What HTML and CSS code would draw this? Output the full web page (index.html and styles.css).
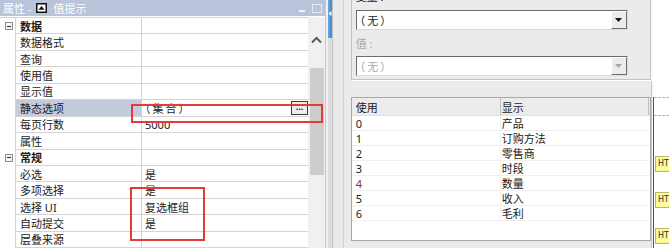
FILE: index.html
```
<!DOCTYPE html>
<html lang="zh-CN">
<head>
    <meta charset="UTF-8">
    <title>值提示 属性</title>
    <link rel="stylesheet" href="styles.css">
</head>
<body>
    <div class="screen">
        <div class="props">
            <div class="props-title">
                <span>属性 -</span>
                <svg class="title-icon" width="11" height="10" viewBox="0 0 11 10">
                    <rect x="0.75" y="0.75" width="9.5" height="8.5" fill="#fff" stroke="#111" stroke-width="1.5"/>
                    <polygon points="2.5,6.8 5.5,3 8.5,6.8" fill="#111"/>
                </svg>
                <span>值提示</span>
                <span class="title-btns">
                    <span class="btn-min"></span>
                    <span class="btn-max"></span>
                </span>
            </div>
            <div class="props-body">
                <div class="grid">
                    <div class="row section">
                        <div class="gutter"><span class="expander"></span></div>
                        <div class="name">数据</div>
                        <div class="value"></div>
                    </div>
                    <div class="row">
                        <div class="gutter"></div>
                        <div class="name">数据格式</div>
                        <div class="value"></div>
                    </div>
                    <div class="row">
                        <div class="gutter"></div>
                        <div class="name">查询</div>
                        <div class="value"></div>
                    </div>
                    <div class="row">
                        <div class="gutter"></div>
                        <div class="name">使用值</div>
                        <div class="value"></div>
                    </div>
                    <div class="row">
                        <div class="gutter"></div>
                        <div class="name">显示值</div>
                        <div class="value"></div>
                    </div>
                    <div class="row selected">
                        <div class="gutter"></div>
                        <div class="name">静态选项</div>
                        <div class="value">
                            <span class="paren">（集合）</span>
                            <span class="ellipsis-btn">...</span>
                        </div>
                    </div>
                    <div class="row">
                        <div class="gutter"></div>
                        <div class="name">每页行数</div>
                        <div class="value">5000</div>
                    </div>
                    <div class="row">
                        <div class="gutter"></div>
                        <div class="name">属性</div>
                        <div class="value"></div>
                    </div>
                    <div class="row section">
                        <div class="gutter"><span class="expander"></span></div>
                        <div class="name">常规</div>
                        <div class="value"></div>
                    </div>
                    <div class="row">
                        <div class="gutter"></div>
                        <div class="name">必选</div>
                        <div class="value">是</div>
                    </div>
                    <div class="row">
                        <div class="gutter"></div>
                        <div class="name">多项选择</div>
                        <div class="value">是</div>
                    </div>
                    <div class="row">
                        <div class="gutter"></div>
                        <div class="name">选择 UI</div>
                        <div class="value">复选框组</div>
                    </div>
                    <div class="row">
                        <div class="gutter"></div>
                        <div class="name">自动提交</div>
                        <div class="value">是</div>
                    </div>
                    <div class="row">
                        <div class="gutter"></div>
                        <div class="name">层叠来源</div>
                        <div class="value"></div>
                    </div>
                </div>
                <div class="vscroll">
                    <svg class="vscroll-up" width="11" height="8" viewBox="0 0 11 8">
                        <polyline points="1,6.5 5.5,2 10,6.5" fill="none" stroke="#5a5a5a" stroke-width="2"/>
                    </svg>
                    <div class="vscroll-thumb"></div>
                </div>
            </div>
        </div>

        <div class="splitter">
            <div class="split-edge"></div>
            <div class="split-rail">
                <div class="split-tab">
                    <svg width="4" height="5" viewBox="0 0 4 5"><polygon points="3.5,0 0.5,2.5 3.5,5" fill="#fff"/></svg>
                </div>
            </div>
            <div class="split-fill"></div>
        </div>

        <div class="editor">
            <div class="group">
                <div class="field-label">变量 :</div>
                <div class="combo">
                    <span class="paren">（无）</span>
                    <span class="combo-btn"><svg width="7" height="4" viewBox="0 0 7 4"><polygon points="0,0 7,0 3.5,4" fill="#111"/></svg></span>
                </div>
                <div class="field-label disabled">值 :</div>
                <div class="combo disabled">
                    <span class="paren">（无）</span>
                    <span class="combo-btn"><svg width="7" height="4" viewBox="0 0 7 4"><polygon points="0,0 7,0 3.5,4" fill="#a8a8a8"/></svg></span>
                </div>
            </div>

            <div class="list">
                <div class="list-head">
                    <div class="col-use">使用</div>
                    <div class="col-show">显示</div>
                </div>
                <div class="list-row"><div class="col-use">0</div><div class="col-show">产品</div></div>
                <div class="list-row"><div class="col-use">1</div><div class="col-show">订购方法</div></div>
                <div class="list-row"><div class="col-use">2</div><div class="col-show">零售商</div></div>
                <div class="list-row"><div class="col-use">3</div><div class="col-show">时段</div></div>
                <div class="list-row"><div class="col-use red">4</div><div class="col-show">数量</div></div>
                <div class="list-row"><div class="col-use">5</div><div class="col-show">收入</div></div>
                <div class="list-row"><div class="col-use">6</div><div class="col-show">毛利</div></div>
            </div>
        </div>

        <div class="outside">
            <div class="outside-edge">
                <div class="dotted-box"></div>
                <div class="badge first">HT</div>
                <div class="badge">HT</div>
                <div class="badge">HT</div>
            </div>
        </div>

        <!-- красные рамки поверх -->
        <div class="mark mark-static"></div>
        <div class="mark mark-multi"></div>
    </div>
</body>
</html>
```

FILE: styles.css
```
* {
    box-sizing: border-box;
}

body {
    margin: 0;
    width: 669px;
    height: 248px;
    overflow: hidden;
    background: #fff;
    color: #1b1b1b;
    font-family: "Noto Sans", "Noto Sans CJK SC", sans-serif;
    font-size: 11px;
}

.screen {
    position: relative;
    display: flex;
    width: 669px;
    height: 248px;
    overflow: hidden;
}

/* левая панель свойств */

.props {
    width: 326px;
    display: flex;
    flex-direction: column;
    background: #fff;
    border-right: 1px solid #c6c6c6;
}

.props-title {
    height: 21px;
    display: flex;
    align-items: center;
    padding-left: 3px;
    background: #b9c4da;
    color: #fff;
    white-space: nowrap;
}

.title-icon {
    margin: 0 6px 0 5px;
}

.title-btns {
    margin-left: auto;
    display: flex;
    align-items: center;
    height: 100%;
}

.btn-min {
    width: 6px;
    height: 2px;
    margin-top: 6px;
    margin-right: 7px;
    background: #eef1f7;
}

.btn-max {
    width: 10px;
    height: 9px;
    margin-right: 3px;
    border: 1px solid #e3e8f1;
}

.props-body {
    flex: 1;
    display: flex;
    margin-top: 1px;
}

.grid {
    width: 308px;
    border-top: 1px solid #d4d4d4;
}

.row {
    display: flex;
    height: 16.44px;
}

.gutter {
    width: 16px;
    display: flex;
    align-items: center;
    padding-left: 5px;
    border-right: 1px solid #d4d4d4;
}

.expander {
    position: relative;
    width: 8px;
    height: 8px;
    border: 1px solid #8c8c8c;
    background: #f4f4f4;
}

.expander::after {
    content: '';
    position: absolute;
    left: 1px;
    top: 2.5px;
    width: 4px;
    height: 1px;
    background: #333;
}

.name {
    width: 126px;
    display: flex;
    align-items: center;
    padding-left: 4px;
    border-right: 1px solid #d4d4d4;
    border-bottom: 1px solid #d4d4d4;
    white-space: nowrap;
}

.value {
    flex: 1;
    display: flex;
    align-items: center;
    padding-left: 3px;
    border-bottom: 1px solid #d4d4d4;
    white-space: nowrap;
}

.section .name {
    font-weight: bold;
}

.selected .name {
    background: #c3cbdd;
}

.paren {
    font-feature-settings: "halt";
    letter-spacing: 2px;
}

.ellipsis-btn {
    margin-left: auto;
    width: 17px;
    height: 14px;
    display: flex;
    align-items: center;
    justify-content: center;
    border: 1px solid #3a3a3a;
    background: #ededed;
    font-size: 9px;
    font-weight: bold;
    line-height: 1;
    padding-bottom: 3px;
}

.vscroll {
    width: 17px;
    display: flex;
    flex-direction: column;
    align-items: center;
    background: #f0f0f0;
}

.vscroll-up {
    margin-top: 19px;
}

.vscroll-thumb {
    width: 14px;
    height: 107px;
    margin-top: 24px;
    margin-left: 1px;
    background: #cdcdcd;
}

/* разделитель */

.splitter {
    width: 18px;
    display: flex;
    background: #e9e9e9;
}

.split-edge {
    width: 2px;
    background: #f0f0f0;
}

.split-rail {
    width: 5px;
    background: #dcdcdc;
    border-right: 1px solid #c4c4c4;
}

.split-tab {
    height: 38px;
    display: flex;
    align-items: flex-start;
    justify-content: center;
    padding-top: 11px;
    background: linear-gradient(to right, #6ca6dc, #3f87cc);
}

.split-fill {
    flex: 1;
    border-right: 1px solid #d0d0d0;
}

/* правая панель редактора */

.editor {
    width: 313px;
    padding-left: 7px;
    background: #ebebeb;
    border-right: 1px solid #c6c6c6;
}

.group {
    width: 300px;
    margin-top: -20px;
    padding: 0 0 3px 4px;
    border: 1px solid #c2c2c2;
    box-shadow: 1px 1px 0 #fff;
}

.field-label {
    height: 16px;
    line-height: 16px;
    margin-top: 8px;
}

.field-label.disabled {
    margin-top: 6px;
    color: #a8a8a8;
}

.combo {
    width: 272px;
    height: 20px;
    display: flex;
    align-items: center;
    margin-top: 5px;
    padding-left: 3px;
    background: #fff;
    border: 1px solid;
    border-color: #6c6c6c #dcdcdc #dcdcdc #6c6c6c;
}

.combo.disabled {
    margin-top: 4px;
    color: #a8a8a8;
}

.combo-btn {
    margin-left: auto;
    width: 16px;
    height: 18px;
    display: flex;
    align-items: center;
    justify-content: center;
    background: #ececec;
    border: 1px solid;
    border-color: #fff #6e6e6e #6e6e6e #fff;
}

.list {
    width: 300px;
    height: 144px;
    margin-top: 17px;
    background: #fff;
    border: 1px solid #a9a9a9;
}

.list-head {
    height: 18px;
    display: flex;
    background: #ececec;
    border-bottom: 1px solid #e0e0e0;
}

.list-head .col-use {
    border-right: 1px solid #c0c0c0;
}

.list-head .col-show {
    width: 148px;
    flex: none;
    border-right: 1px solid #c0c0c0;
}

.col-use {
    width: 149px;
    display: flex;
    align-items: center;
    padding-left: 4px;
    border-right: 1px solid #f2f2f2;
}

.col-show {
    flex: 1;
    display: flex;
    align-items: center;
    padding-left: 1px;
}

.list-row {
    height: 15px;
    display: flex;
    border-bottom: 1px solid #efefef;
}

.red {
    color: #9c2a1e;
}

/* кусок соседнего окна справа */

.outside {
    flex: 1;
    border-left: 1px solid #f6f6f6;
    background: #fff;
}

.outside-edge {
    height: 100%;
    border-left: 1px solid #555;
}

.dotted-box {
    height: 19px;
    margin-top: 97px;
    border-top: 1px dashed #b5b5b5;
    border-bottom: 1px dashed #b5b5b5;
}

.badge {
    height: 16px;
    margin-top: 20px;
    margin-left: 1px;
    padding-left: 2px;
    background: #fbfb9c;
    border: 1px solid #b7b76a;
    border-right: none;
    font-family: "DejaVu Sans", sans-serif;
    font-size: 8px;
    line-height: 14px;
    color: #333;
    overflow: hidden;
}

.badge.first {
    margin-top: 40px;
}

/* красные рамки */

.mark {
    position: absolute;
    border: 2px solid #e53a3a;
}

.mark-static {
    left: 131px;
    top: 103.5px;
    width: 192px;
    height: 19px;
}

.mark-multi {
    left: 129.5px;
    top: 187px;
    width: 75px;
    height: 53.5px;
}
```
